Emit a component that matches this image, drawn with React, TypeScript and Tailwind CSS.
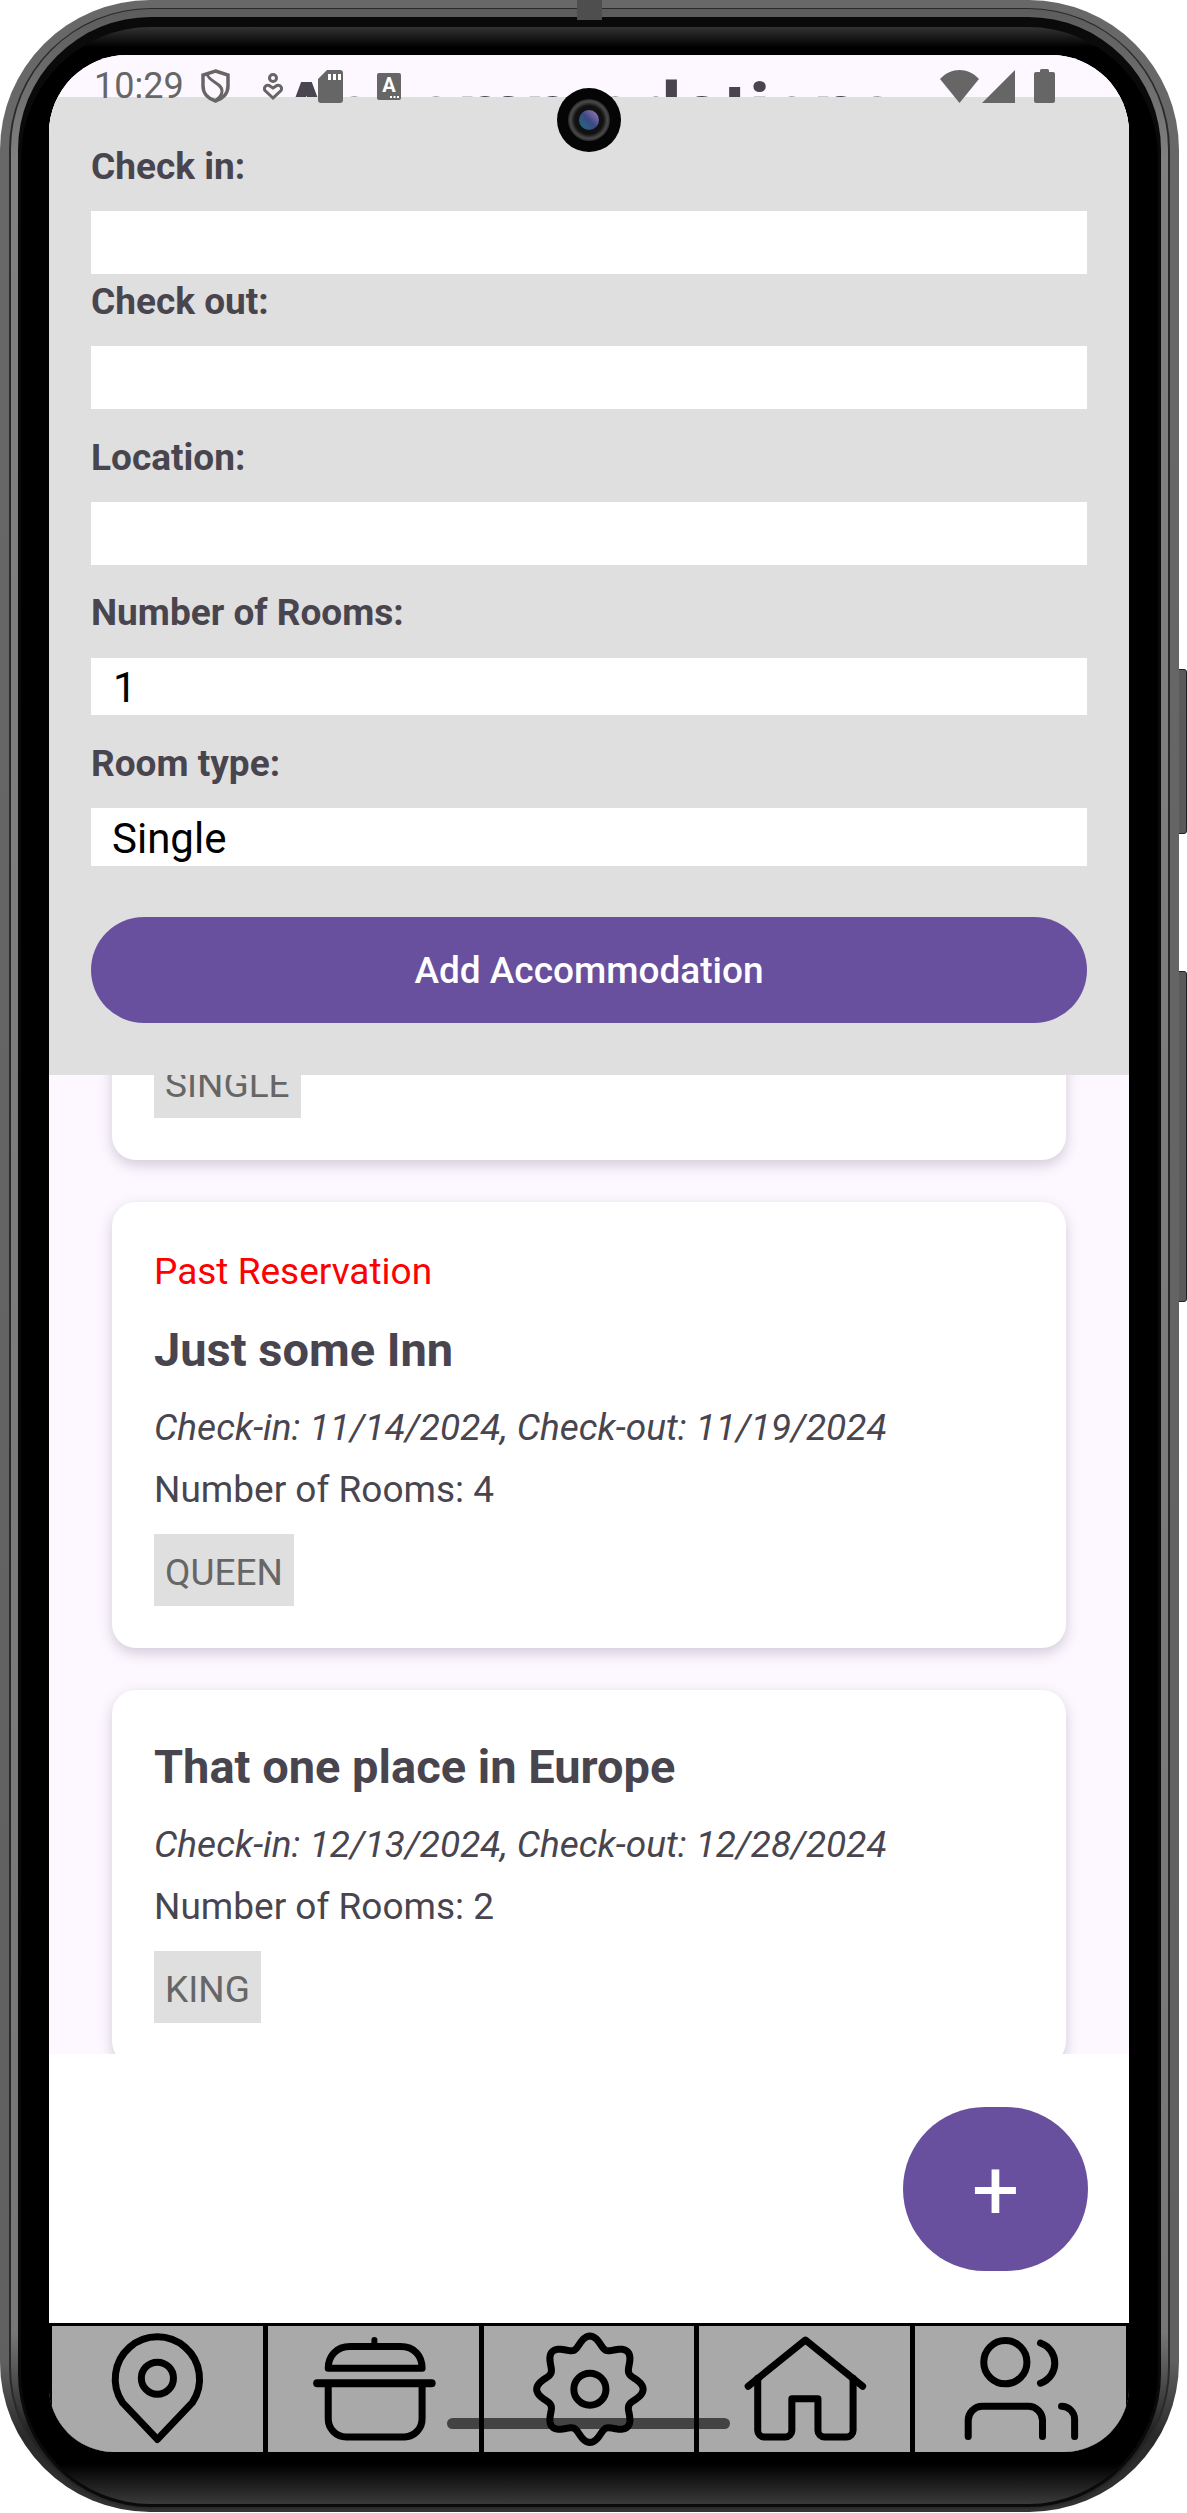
// App.tsx
import React from "react";

const gearPath = (() => {
  const pts: string[] = [];
  for (let i = 0; i < 240; i++) {
    const t = (i / 240) * Math.PI * 2;
    const r = 47.5 + 5.5 * Math.cos(8 * t);
    pts.push(`${(105.5 + r * Math.sin(t)).toFixed(2)} ${(63 - r * Math.cos(t)).toFixed(2)}`);
  }
  return `M${pts.join("L")}Z`;
})();

const navIconProps = {
  viewBox: "0 0 210 126",
  fill: "none",
  stroke: "#000",
  strokeWidth: 7,
  strokeLinecap: "round" as const,
  strokeLinejoin: "round" as const,
  className: "w-full h-full",
};

const PinIcon = () => (
  <svg {...navIconProps}>
    <path d="M105 113L70 76A42 42 0 1 1 140 76Z" />
    <circle cx="105" cy="52" r="16" />
  </svg>
);

const PotIcon = () => (
  <svg {...navIconProps}>
    <path d="M60 42C60 30 68 20.5 82 20.5H132C146 20.5 153.5 30 153.5 42Z" />
    <path d="M106 14V18" strokeWidth="6" />
    <path d="M49 57H163" strokeWidth="8" />
    <path d="M60 61V92A18 18 0 0 0 78 110.5H136A18 18 0 0 0 153.5 92V61" />
  </svg>
);

const GearIcon = () => (
  <svg {...navIconProps}>
    <path d={gearPath} />
    <circle cx="105.5" cy="63" r="16" />
  </svg>
);

const HomeIcon = () => (
  <svg {...navIconProps}>
    <path d="M49 60L106 14L163 60" />
    <path d="M58.5 52V104A6.5 6.5 0 0 0 65 110.5H86A6.5 6.5 0 0 0 92.5 104V72.5H118.5V104A6.5 6.5 0 0 0 125 110.5H147A6.5 6.5 0 0 0 153.5 104V52" />
  </svg>
);

const UsersIcon = () => (
  <svg {...navIconProps}>
    <circle cx="90" cy="36" r="21.5" />
    <path d="M125 17C144 24 144 50 125 57" />
    <path d="M53 110V94A14 14 0 0 1 67 80H113A14 14 0 0 1 127 94V110" />
    <path d="M146 80A13 13 0 0 1 159 93V110" />
  </svg>
);

const StatusBar = () => (
  <div className="absolute top-0 left-0 right-0 h-[62px] flex items-center pl-[45px] pr-[74px] text-[#666]">
    <span className="text-[36px] leading-none">10:29</span>
    <svg viewBox="0 0 29 34" className="ml-[17px] w-[29px] h-[34px]" fill="none" stroke="#666" strokeWidth="3.5">
      <path d="M14.5 2L27 6V17C27 25 21 30 14.5 32C8 30 2 25 2 17V6Z" />
      <path d="M6 5C8 13 21 14 21 22C21 26 18 29 15 31" strokeWidth="3" />
    </svg>
    <svg viewBox="0 0 20 27" className="ml-[33px] w-[20px] h-[27px]" fill="none" stroke="#666" strokeWidth="3">
      <circle cx="10" cy="5" r="3.5" />
      <path d="M10 25L2 17.500C0.500 15 2.500 11.500 6 12.500L10 15L14 12.500C17.500 11.500 19.500 15 18 17.500Z" />
    </svg>
    <svg viewBox="0 0 25 33" className="ml-[35px] w-[25px] h-[33px]">
      <path d="M9 0H22A3 3 0 0 1 25 3V30A3 3 0 0 1 22 33H3A3 3 0 0 1 0 30V9Z" fill="#666" />
      <rect x="10" y="4" width="3" height="6" fill="#fff" />
      <rect x="15" y="4" width="3" height="6" fill="#fff" />
      <rect x="20" y="4" width="3" height="6" fill="#fff" />
    </svg>
    <svg viewBox="0 0 24 27" className="ml-[34px] w-[24px] h-[27px]">
      <rect width="24" height="27" rx="2" fill="#666" />
      <text x="12" y="19" textAnchor="middle" fontFamily="Roboto" fontWeight="700" fontSize="20" fill="#fff">A</text>
      <rect x="13" y="23" width="2" height="2" fill="#fff" />
      <rect x="16.500" y="23" width="2" height="2" fill="#fff" />
      <rect x="20" y="23" width="2" height="2" fill="#fff" />
    </svg>
    <svg viewBox="0 0 39 33" className="ml-auto w-[39px] h-[33px]">
      <path d="M19.500 33L0 9C11 -3 28 -3 39 9Z" fill="#666" />
    </svg>
    <svg viewBox="0 0 33 33" className="ml-[3px] w-[33px] h-[33px]">
      <path d="M33 0V33H0Z" fill="#666" />
    </svg>
    <svg viewBox="0 0 21 34" className="ml-[19px] w-[21px] h-[34px]">
      <path d="M6 3V1.500A1.500 1.500 0 0 1 7.500 0H13.500A1.500 1.500 0 0 1 15 1.500V3H19A2 2 0 0 1 21 5V32A2 2 0 0 1 19 34H2A2 2 0 0 1 0 32V5A2 2 0 0 1 2 3Z" fill="#666" />
    </svg>
  </div>
);

const Tag = ({ children }: { children: React.ReactNode }) => (
  <span className="self-start h-[72px] px-[11px] bg-[#dfdfdf] text-[#666] text-[37px] leading-[77px]">{children}</span>
);

const ReservationCard = ({
  past,
  name,
  dates,
  rooms,
  type,
}: {
  past?: boolean;
  name: string;
  dates: string;
  rooms: number;
  type: string;
}) => (
  <div className="bg-white rounded-[24px] shadow-[0_5px_14px_rgba(60,40,80,0.22)] px-[42px] pt-[49px] pb-[42px] flex flex-col">
    {past && <p className="text-[#ff0000] text-[37px] leading-[42px] mb-[29px]">Past Reservation</p>}
    <h2 className="text-[#49454f] text-[47px] leading-[56px] font-bold">{name}</h2>
    <p className="mt-[30px] text-[#49454f] text-[37px] leading-[40px] italic">{dates}</p>
    <p className="mt-[22px] mb-[24px] text-[#49454f] text-[37px] leading-[40px]">Number of Rooms: {rooms}</p>
    <Tag>{type}</Tag>
  </div>
);

const AddForm = () => (
  <div className="absolute top-[42px] left-0 right-0 h-[978px] bg-[#dfdfdf] pl-[42px] pr-[42px] pt-[50px] flex flex-col text-[#49454f] text-[37px] font-bold">
    <label className="leading-[40px] mb-[24px]">Check in:</label>
    <div className="h-[63px] bg-white" />
    <label className="leading-[40px] mt-[8px] mb-[24px]">Check out:</label>
    <div className="h-[63px] bg-white" />
    <label className="leading-[40px] mt-[29px] mb-[24px]">Location:</label>
    <div className="h-[63px] bg-white" />
    <label className="leading-[40px] mt-[28px] mb-[25px]">Number of Rooms:</label>
    <div className="h-[57px] bg-white pl-[22px] text-black text-[42px] font-normal leading-[59px] overflow-hidden">1</div>
    <label className="leading-[40px] mt-[29px] mb-[24px]">Room type:</label>
    <div className="h-[58px] bg-white pl-[21px] text-black text-[42px] font-normal leading-[61px] overflow-hidden">Single</div>
    <button className="mt-[51px] h-[106px] pt-[2px] rounded-full bg-[#68509f] text-white text-[37px] font-medium">
      Add Accommodation
    </button>
  </div>
);

const App: React.FC = () => {
  return (
    <div className="relative w-[1187px] h-[2513px] bg-white overflow-hidden [font-family:Roboto,sans-serif]">
      {/* side buttons */}
      <div className="absolute left-[1176px] top-[669px] w-[11px] h-[165px] rounded-r-[3px] bg-[#5a5a5a] border border-[#222]" />
      <div className="absolute left-[1176px] top-[971px] w-[11px] h-[331px] rounded-r-[3px] bg-[#5a5a5a] border border-[#222]" />

      {/* phone frame */}
      <div className="relative w-[1179px] h-[2512px] rounded-[150px] pt-[8px] px-[9px] pb-[3px] bg-[linear-gradient(to_bottom,#686868,#606060_94%,#2a2a2a_97%,#333)]">
        <div className="h-full rounded-[142px] pt-[1px] px-[2px] pb-[2px] bg-[#2a2a2a]">
          <div className="h-full rounded-[140px] pt-[8px] px-[7px] bg-[linear-gradient(to_bottom,#5c5c5c,#808080_6%,#777_93%,#222_97%)]">
            <div className="h-full rounded-[133px] pt-[10px] px-[3px] pb-[3px] bg-[#0a0a0a]">
              <div className="h-full rounded-[130px] pt-[28px] pl-[28px] pr-[29px] pb-[52px] bg-[linear-gradient(to_bottom,#333,#000_20px,#000_calc(100%-40px),#3a3a3a)]">
                {/* screen */}
                <div className="relative h-full rounded-t-[78px] rounded-b-[65px] overflow-hidden flex flex-col bg-white">
                  <div className="h-[1999px] shrink-0 overflow-hidden bg-[#fdf8ff] px-[63px]">
                    <h1 className="pt-[12px] text-center text-[#49454f] text-[78px] leading-[90px] font-bold">
                      Accommodations
                    </h1>
                    <div className="mt-[19px] flex flex-col gap-[42px]">
                      <div className="h-[984px] bg-white rounded-[24px] shadow-[0_5px_14px_rgba(60,40,80,0.22)] px-[42px] pb-[42px] flex flex-col justify-end">
                        <Tag>SINGLE</Tag>
                      </div>
                      <ReservationCard
                        past
                        name="Just some Inn"
                        dates="Check-in: 11/14/2024, Check-out: 11/19/2024"
                        rooms={4}
                        type="QUEEN"
                      />
                      <ReservationCard
                        name="That one place in Europe"
                        dates="Check-in: 12/13/2024, Check-out: 12/28/2024"
                        rooms={2}
                        type="KING"
                      />
                    </div>
                  </div>

                  <div className="h-[269px] shrink-0 bg-white flex justify-end items-start pr-[41px] pt-[53px]">
                    <button className="w-[185px] h-[164px] rounded-full bg-[#68509f] text-white text-[84px] leading-[168px] font-normal">
                      +
                    </button>
                  </div>

                  <nav className="h-[129px] shrink-0 bg-black border-t-[3px] border-x-[3px] border-black grid grid-cols-5 gap-[5px]">
                    <div className="bg-[#a9a9a9]"><PinIcon /></div>
                    <div className="bg-[#a9a9a9]"><PotIcon /></div>
                    <div className="bg-[#a9a9a9]"><GearIcon /></div>
                    <div className="bg-[#a9a9a9]"><HomeIcon /></div>
                    <div className="bg-[#a9a9a9]"><UsersIcon /></div>
                  </nav>

                  <AddForm />
                  <StatusBar />

                  {/* camera */}
                  <div className="absolute left-[508px] top-[33px] w-[64px] h-[64px] rounded-full bg-[#050505] flex items-center justify-center">
                    <div className="w-[42px] h-[42px] rounded-full bg-[radial-gradient(circle,#111_48%,#4a4a4a_62%,#0c0c0c_78%)] flex items-center justify-center">
                      <div className="w-[20px] h-[20px] rounded-full bg-[linear-gradient(45deg,#1c6f86,#3a4a80_50%,#a77fc0)]" />
                    </div>
                  </div>

                  {/* gesture bar */}
                  <div className="absolute left-[398px] top-[2363px] w-[283px] h-[11px] rounded-full bg-black/60" />
                </div>
              </div>
            </div>
          </div>
        </div>
        <div className="absolute left-[577px] top-0 w-[25px] h-[20px] bg-[#4e4e4e]" />
      </div>
    </div>
  );
};

export default App;
